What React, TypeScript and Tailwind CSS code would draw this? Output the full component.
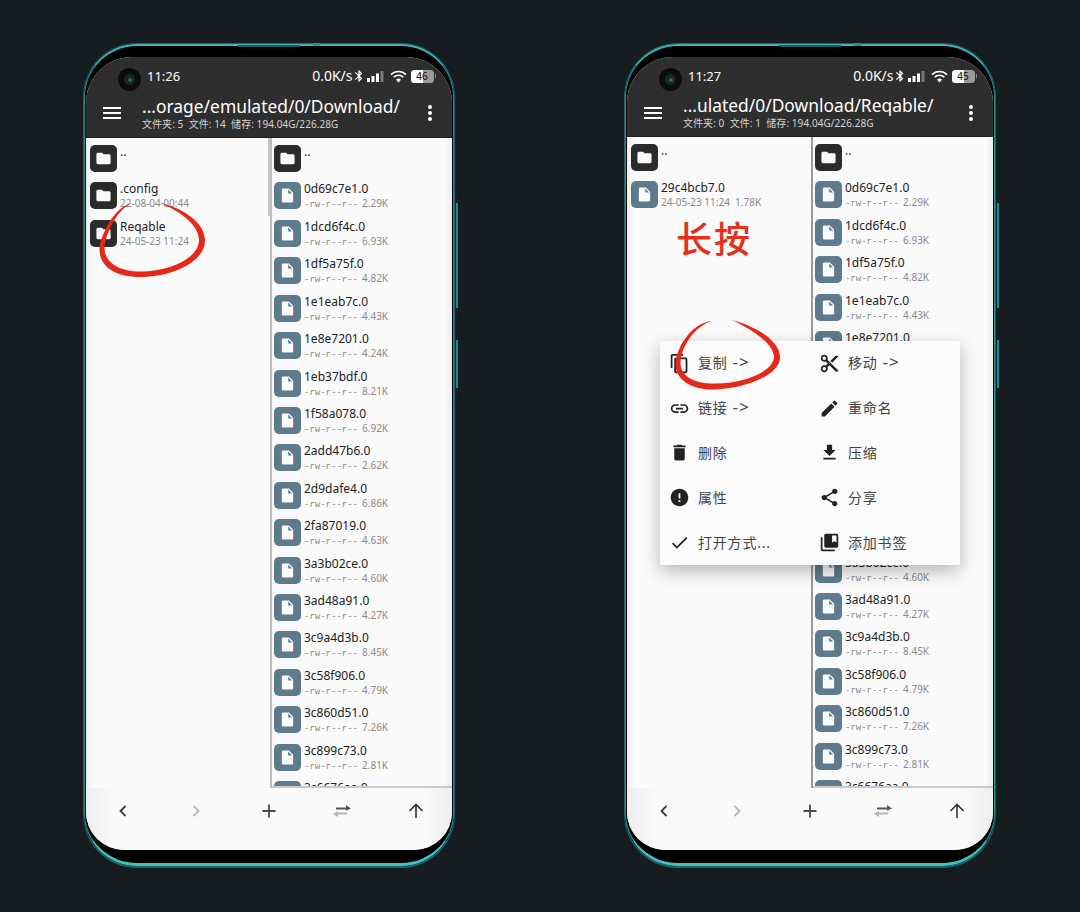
import React from 'react';
import {
    MdContentCopy, MdContentCut, MdLink, MdEdit, MdDelete, MdGetApp, MdError, MdShare, MdCheck,
    MdCollectionsBookmark, MdFolder, MdInsertDriveFile, MdBluetooth,
} from 'react-icons/md';

const FONT = '"Noto Sans", "Noto Sans CJK SC", sans-serif';

const files = [
    ['0d69c7e1.0', '2.29K'], ['1dcd6f4c.0', '6.93K'], ['1df5a75f.0', '4.82K'], ['1e1eab7c.0', '4.43K'],
    ['1e8e7201.0', '4.24K'], ['1eb37bdf.0', '8.21K'], ['1f58a078.0', '6.92K'], ['2add47b6.0', '2.62K'],
    ['2d9dafe4.0', '6.86K'], ['2fa87019.0', '4.63K'], ['3a3b02ce.0', '4.60K'], ['3ad48a91.0', '4.27K'],
    ['3c9a4d3b.0', '8.45K'], ['3c58f906.0', '4.79K'], ['3c860d51.0', '7.26K'], ['3c899c73.0', '2.81K'],
    ['3c6676aa.0', '3.10K'],
];

const Row = ({ folder, name, sub, perms, narrow }: { folder?: boolean; name: string; sub?: string; perms?: boolean; narrow?: boolean }) => (
    <div className={`h-[37.43px] shrink-0 flex items-start gap-[3px] pt-[7px] ${narrow ? 'pl-[2px]' : 'pl-[4px]'}`}>
        <div className={`w-[27px] h-[27px] shrink-0 rounded-[5px] flex items-center justify-center ${folder ? 'bg-[#2b2b2b]' : 'bg-[#5d7b8c]'}`}>
            {folder ? <MdFolder size={17} color="#fafafa" /> : <MdInsertDriveFile size={17} color="#fafafa" />}
        </div>
        <div className="min-w-0 whitespace-pre">
            <div className="text-[12px] leading-[15px] text-[#222] -mt-[1px]">{name}</div>
            {sub && (
                <div className="flex items-baseline text-[10px] leading-[13px] mt-[1px] text-[#8a8a8a]">
                    {perms && <span className="font-['Liberation_Mono'] text-[9px] mr-[4px]">-rw-r--r--</span>}
                    <span>{sub}</span>
                </div>
            )}
        </div>
    </div>
);

const StatusBar = ({ time, battery }: { time: string; battery: string }) => (
    <div className="h-[46px] flex items-start pt-[11px] pl-[32px] text-white relative">
        <div className="w-[23px] h-[23px] rounded-full bg-[#0c0c0c] flex items-center justify-center">
            <div className="w-[11px] h-[11px] rounded-full bg-[#1d2528] flex items-center justify-center">
                <div className="w-[4px] h-[4px] rounded-full bg-[#1f6a72]" />
            </div>
        </div>
        <span className="ml-[6px] text-[13px] leading-[16px]">{time}</span>
        <div className="ml-auto mr-[16px] flex items-center h-[16px]">
            <span className="text-[14px] leading-[16px]">0.0K/s</span>
            <MdBluetooth size={14} color="#fff" className="-ml-[1px]" />
            {/* signal bars */}
            <svg width="17" height="11" viewBox="0 0 17 11" className="ml-[1px]">
                <rect x="0" y="7" width="3" height="4" fill="#fff" />
                <rect x="4.5" y="5" width="3" height="6" fill="#fff" />
                <rect x="9" y="2.5" width="3" height="8.5" fill="#fff" />
                <rect x="13.5" y="0" width="3" height="11" fill="#777" />
            </svg>
            <svg width="17" height="13" viewBox="0 0 17 13" className="ml-[6px]">
                <path d="M1 4.6a10.6 10.6 0 0 1 15 0" fill="none" stroke="#fff" strokeWidth="1.6" />
                <path d="M3.6 7.3a7 7 0 0 1 9.8 0" fill="none" stroke="#fff" strokeWidth="1.6" />
                <path d="M6 9.8a3.6 3.6 0 0 1 5 0L8.5 12.4z" fill="#fff" />
            </svg>
            <div className="ml-[4px] w-[23px] h-[13px] rounded-[3.5px] bg-[#9a9a9a] relative overflow-hidden">
                <div className="absolute inset-y-0 left-0 w-[12px] bg-white" />
                <span className="absolute inset-0 text-center text-[10px] leading-[13px] font-medium text-[#222]">{battery}</span>
            </div>
            <div className="w-[1.5px] h-[4px] bg-[#888] ml-[1px]" />
        </div>
    </div>
);

const Header = ({ title, stats, time, battery, tall }: { title: string; stats: string; time: string; battery: string; tall: boolean }) => (
    <div className={`${tall ? 'h-[81px]' : 'h-[80px]'} shrink-0 bg-[#2e2e2e] border-b border-[#1e1e1e]`}>
        <StatusBar time={time} battery={battery} />
        <div className="flex items-start">
            <div className="w-[18px] ml-[17px] mt-[4px] flex flex-col gap-[3px]">
                <div className="h-[2px] bg-white" />
                <div className="h-[2px] bg-white" />
                <div className="h-[2px] bg-white" />
            </div>
            <div className={`ml-[21px] w-[277px] whitespace-pre text-white ${tall ? '-mt-[9px]' : '-mt-[10px]'}`}>
                <div className="text-[17.4px] leading-[24px]">{title}</div>
                <div className="text-[10px] leading-[13px] tracking-[0.06px] text-[#d4d4d4]">{stats}</div>
            </div>
            <div className="ml-[9px] mt-[2px] flex flex-col gap-[2px]">
                <div className="w-[4px] h-[4px] rounded-full bg-white" />
                <div className="w-[4px] h-[4px] rounded-full bg-white" />
                <div className="w-[4px] h-[4px] rounded-full bg-white" />
            </div>
        </div>
    </div>
);

const BottomNav = () => (
    <div className="h-[62px] shrink-0 bg-[#fafafa] relative flex items-start justify-between pt-[14px] pl-[28px] pr-[27px]">
        <div className="absolute inset-y-0 left-0 w-[30px] bg-gradient-to-r from-black/5 to-transparent" />
        <div className="absolute inset-y-0 right-0 w-[30px] bg-gradient-to-l from-black/5 to-transparent" />
        <svg width="18" height="18" viewBox="0 0 18 18"><path d="M11.5 4 6.5 9l5 5" fill="none" stroke="#3c3c3c" strokeWidth="1.8" /></svg>
        <svg width="18" height="18" viewBox="0 0 18 18"><path d="M6.5 4l5 5-5 5" fill="none" stroke="#b5b5b5" strokeWidth="1.8" /></svg>
        <svg width="18" height="18" viewBox="0 0 18 18"><path d="M9 2.5v13M2.5 9h13" fill="none" stroke="#4a4a4a" strokeWidth="1.8" /></svg>
        <svg width="20" height="18" viewBox="0 0 20 18">
            <path d="M4 6.5h13" fill="none" stroke="#555" strokeWidth="1.8" />
            <path d="M14 3l5 3.5-5 2z" fill="#555" />
            <path d="M15 11.5H3" fill="none" stroke="#b5b5b5" strokeWidth="1.8" />
            <path d="M6 9 1 12l5 3z" fill="#b5b5b5" />
        </svg>
        <svg width="18" height="18" viewBox="0 0 18 18"><path d="M9 16V2.5M2.5 9 9 2.5 15.5 9" fill="none" stroke="#333" strokeWidth="1.6" /></svg>
    </div>
);

const menuItems = [
    [MdContentCopy, '复制', true], [MdContentCut, '移动', true],
    [MdLink, '链接', true], [MdEdit, '重命名', false],
    [MdDelete, '删除', false], [MdGetApp, '压缩', false],
    [MdError, '属性', false], [MdShare, '分享', false],
    [MdCheck, '打开方式...', false], [MdCollectionsBookmark, '添加书签', false],
] as const;

const ContextMenu = () => (
    <div className="absolute left-[36px] top-[298px] w-[300px] h-[224px] rounded-[2px] bg-[#fbfbfb] shadow-[0_6px_18px_rgba(0,0,0,0.28)] grid grid-cols-2 grid-rows-5">
        {menuItems.map(([Icon, label, arrow]) => (
            <div key={label} className="flex items-center pl-[9px]">
                <Icon size={21} color="#222" />
                <span className={`ml-[8px] text-[14px] leading-[20px] tracking-[0.8px] text-[#444] whitespace-pre ${arrow ? '-mt-[1px]' : ''}`}>
                    {label}
                    {arrow && <span className="ml-[5px] text-[17px] leading-[20px] tracking-[1px]">-&gt;</span>}
                </span>
            </div>
        ))}
    </div>
);

const Phone = ({ right, title, stats, time, battery, children, leftRows }: {
    right?: boolean; title: string; stats: string; time: string; battery: string;
    children?: React.ReactNode; leftRows: React.ReactNode;
}) => (
    <div className="relative w-[372px] h-[825px] shrink-0">
        <div className="absolute inset-0 rounded-[54px] border border-b-2 border-[#1b6468] bg-black">
            <div className="h-full rounded-[53px] bg-black border-t-2 border-b-[3px] border-x border-t-[#3fb4b6] border-b-[#46c0bf] border-x-[#1d8d91] pt-[11px] pl-px pr-px pb-[13px]">
                <div className="h-full rounded-t-[46px] rounded-b-[38px] overflow-hidden flex flex-col bg-[#fafafa] relative">
                    <Header title={title} stats={stats} time={time} battery={battery} tall={!right} />
                    <div className="flex-1 min-h-0 flex">
                        <div className="w-[184px] shrink-0 flex flex-col overflow-hidden relative">
                            {leftRows}
                            {!right && <div className="absolute right-0 top-0 w-[2px] h-[78px] bg-[#c4c4c4]" />}
                        </div>
                        <div className={`w-[2px] shrink-0 ${right ? 'bg-[#9a9a9a]' : 'bg-[#bdbdbd]'}`} />
                        <div className="flex-1 flex flex-col overflow-hidden border-b-2 border-[#c9c9c9]">
                            <Row folder narrow name=".." />
                            {files.map(([name, size]) => (
                                <Row key={name} narrow perms name={name} sub={size} />
                            ))}
                        </div>
                    </div>
                    <BottomNav />
                    {/* curved glass shading */}
                    <div className="absolute left-0 top-[81px] bottom-[62px] w-[8px] bg-gradient-to-r from-black/5 to-transparent pointer-events-none" />
                    <div className="absolute right-0 top-[81px] bottom-[62px] w-[8px] bg-gradient-to-l from-black/5 to-transparent pointer-events-none" />
                </div>
            </div>
        </div>
        {/* speaker grille and antenna notch */}
        <div className="absolute left-[155px] top-[2px] w-[62px] h-[2px] bg-[#1f5b5e]" />
        <div className="absolute left-[230px] top-0 w-[7px] h-[3px] bg-[#2b8d90]" />
        {/* side buttons */}
        <div className="absolute left-[373px] top-[160px] w-[2px] h-[105px] bg-[#1d8a8f]" />
        <div className="absolute left-[373px] top-[297px] w-[2px] h-[48px] bg-[#1d8a8f]" />
        {children}
    </div>
);

export default function App() {
    return (
        <div className="w-[1080px] h-[912px] bg-[#171c20] flex gap-[169px] pt-[43px] pl-[83px] overflow-hidden" style={{ fontFamily: FONT }}>
            <Phone
                title="...orage/emulated/0/Download/"
                stats="文件夹: 5  文件: 14  储存: 194.04G/226.28G"
                time="11:26"
                battery="46"
                leftRows={<>
                    <Row folder name=".." />
                    <Row folder name=".config" sub="22-08-04 00:44" />
                    <Row folder name="Reqable" sub="24-05-23 11:24" />
                </>}
            >
                <svg className="absolute inset-0 pointer-events-none" width="372" height="825" viewBox="83 43 372 825">
                    <path fill="#e4291a" d="M133 203C117 206 106 224 100 244C96.5 264 112 277 140 277C172 277 205.5 262 205 240C204.5 221 180 207 160 203C177 210 198.5 223 199 240C199 258 170 271.5 140 271.5C117 271.5 103 261 104.5 245C109 226 119 208 133 203Z" />
                </svg>
            </Phone>
            <Phone
                right
                title="...ulated/0/Download/Reqable/"
                stats="文件夹: 0  文件: 1  储存: 194.04G/226.28G"
                time="11:27"
                battery="45"
                leftRows={<>
                    <Row folder name=".." />
                    <Row name="29c4bcb7.0" sub="24-05-23 11:24  1.78K" />
                </>}
            >
                <div className="absolute left-[52px] top-[172px] text-[36px] leading-[50px] tracking-[2px] font-medium text-[#e6301c]">长按</div>
                <ContextMenu />
                <svg className="absolute inset-0 pointer-events-none" width="372" height="825" viewBox="624 43 372 825">
                    <path fill="#e4291a" d="M712 321C692 323 678 345 675.5 362C674.5 382 695 390 715 389.5C745 388.5 780.5 375 780 357C779.5 340 755 326 732 320C751 329 773.5 343 774 357C773.5 371 745 383.5 715 383.5C698 384 680 378 680.5 362C682 345 695 326 712 321Z" />
                </svg>
            </Phone>
        </div>
    );
}
